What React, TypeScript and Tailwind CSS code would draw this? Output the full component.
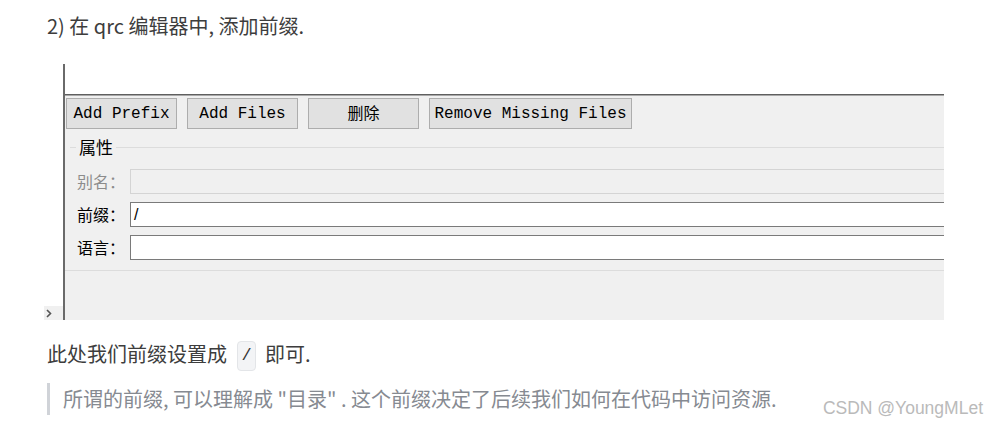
import { type ReactNode } from 'react';

function QtButton({ children, width, cjk }: { children: ReactNode; width: string; cjk?: boolean }) {
  return (
    <div
      className={`${width} h-[31px] flex items-center justify-center bg-[#e1e1e1] border border-[#adadad] text-[16px] text-black ${
        cjk ? "font-['Noto_Sans_CJK_SC',sans-serif] leading-[20px] pb-[3px]" : "font-['Liberation_Mono',monospace]"
      }`}
    >
      {children}
    </div>
  );
}

function FieldRow({ label, value, disabled }: { label: string; value?: string; disabled?: boolean }) {
  return (
    <div className="flex items-center h-[25px]">
      <div className={`w-[53px] text-[16px] leading-[25px] ${disabled ? 'text-[#8c8c8c]' : 'text-black'}`}>
        {label}
      </div>
      <div
        className={`flex-1 h-[25px] border border-r-0 flex items-center pl-[3px] font-['Liberation_Sans',sans-serif] text-[16px] text-black ${
          disabled ? 'bg-[#f0f0f0] border-[#d4d4d4]' : 'bg-white border-[#7a7a7a]'
        }`}
      >
        {value}
      </div>
    </div>
  );
}

export default function App() {
  return (
    <div className="w-[987px] h-[424px] bg-white overflow-hidden font-['Noto_Sans_CJK_SC',sans-serif]">
      {/* Heading line */}
      <p className="pl-[47px] pt-[11px] text-[20px] leading-[30px] text-[#3d3d3d]">2) 在 qrc 编辑器中, 添加前缀.</p>

      {/* Screenshot of the qrc editor */}
      <div className="ml-[44px] mt-[23px] w-[900px] h-[256px] flex">
        <div className="w-[19px] flex flex-col justify-end">
          <div className="h-[14px] bg-[#f0f0f0] flex items-center pl-[2px]">
            <svg width="6" height="9" viewBox="0 0 6 9">
              <polyline points="1,1 4.5,4.5 1,8" fill="none" stroke="#555" strokeWidth="1.6" />
            </svg>
          </div>
        </div>
        <div className="w-[2px] bg-[#6a6a6a]" />
        <div className="flex-1 flex flex-col">
          <div className="h-[30px] bg-white" />
          <div className="h-px bg-[#5f5f5f]" />
          <div className="h-px bg-[#a8a8a8]" />
          <div className="flex-1 bg-[#f0f0f0] flex flex-col">
            {/* Toolbar */}
            <div className="flex gap-[10px] pt-[2px] pl-[1px]">
              <QtButton width="w-[111px]">Add Prefix</QtButton>
              <QtButton width="w-[111px]">Add Files</QtButton>
              <QtButton width="w-[111px]" cjk>删除</QtButton>
              <QtButton width="w-[203px]">Remove Missing Files</QtButton>
            </div>

            {/* Group box */}
            <div className="mt-[7px] h-[22px] flex items-center">
              <div className="w-[5px]" />
              <div className="w-[6px] h-px bg-[#dcdcdc]" />
              <span className="px-[3px] text-[17px] text-black leading-[22px]">属性</span>
              <div className="flex-1 h-px bg-[#dcdcdc]" />
            </div>
            <div className="mt-[11px] pl-[12px] flex flex-col gap-[8px]">
              <FieldRow label="别名：" disabled />
              <FieldRow label="前缀：" value="/" />
              <FieldRow label="语言：" />
            </div>
            <div className="mt-[10px] h-px bg-[#dcdcdc]" />
          </div>
        </div>
      </div>

      {/* Second line with inline code */}
      <div className="pl-[47px] mt-[19px] flex items-start text-[20px] leading-[30px] text-[#3d3d3d]">
        <span>此处我们前缀设置成</span>
        <code className="ml-[10px] mt-[2px] w-[19px] h-[30px] flex items-center justify-center rounded-[4px] bg-[#f3f4f6] border border-[#e3e5e8] font-['Liberation_Mono',monospace] text-[17px] text-[#333]">
          /
        </code>
        <span className="ml-[9px]">即可.</span>
      </div>

      {/* Quote + watermark */}
      <div className="mt-[12px] flex items-start">
        <blockquote className="ml-[47px] h-[32px] border-l-[3px] border-[#d0d3d8] pl-[13px] text-[20px] leading-[32px] text-[#868a91] whitespace-nowrap">
          所谓的前缀, 可以理解成 "目录" . 这个前缀决定了后续我们如何在代码中访问资源.
        </blockquote>
        <span className="ml-auto mr-[4px] mt-[15px] font-['Liberation_Sans',sans-serif] text-[17.5px] leading-[20px] text-[#bababa]">
          CSDN @YoungMLet
        </span>
      </div>
    </div>
  );
}
